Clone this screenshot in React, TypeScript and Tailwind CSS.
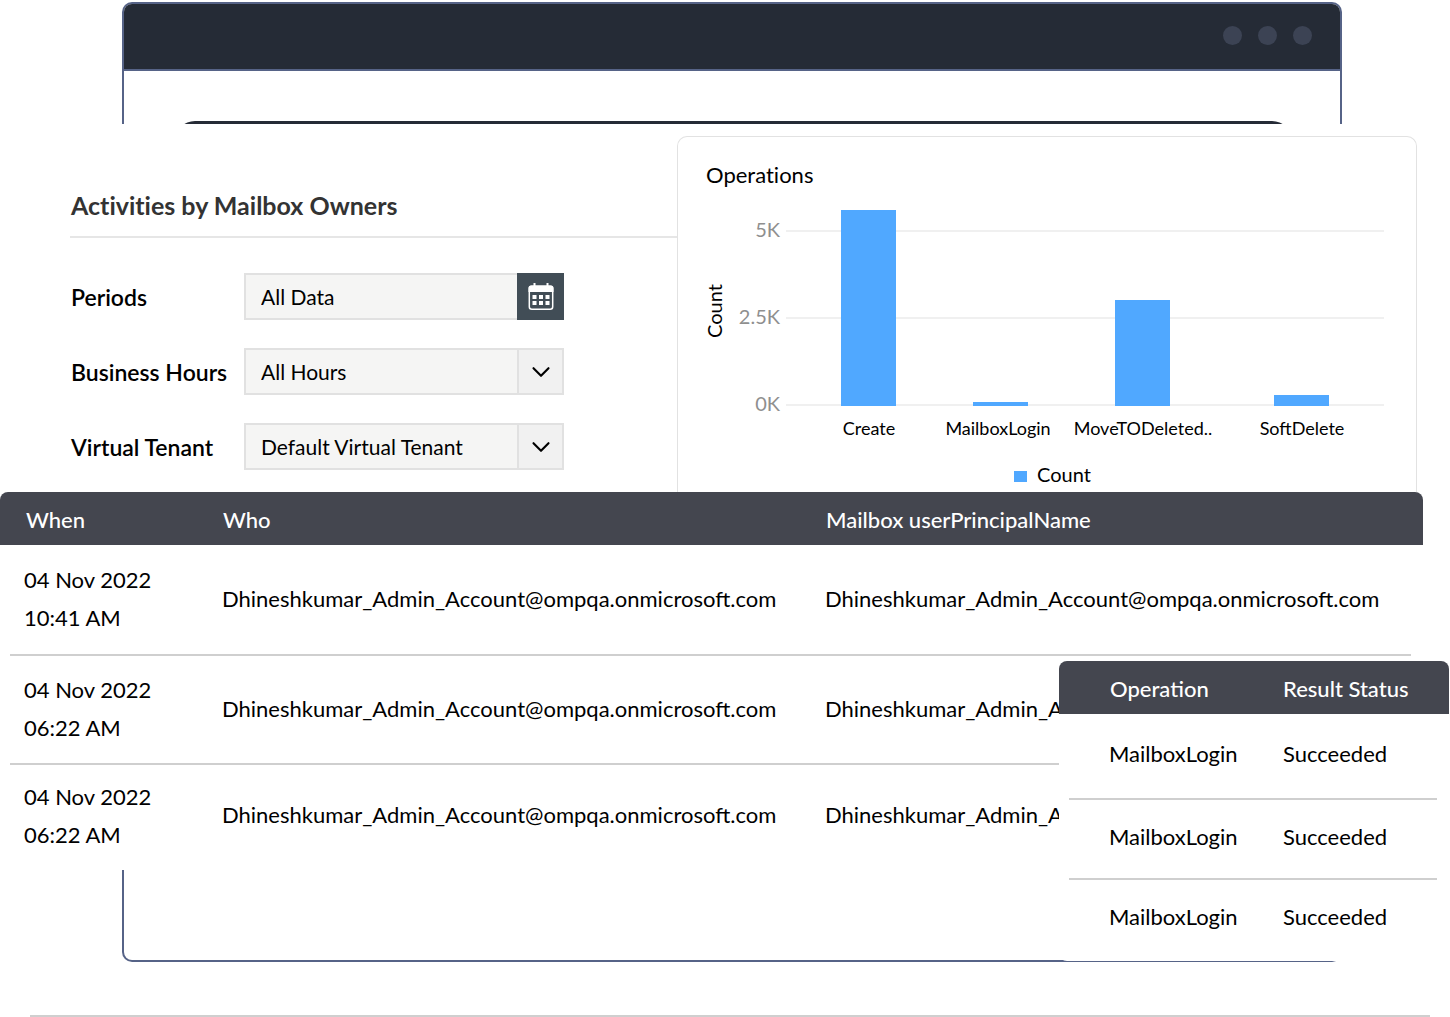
import { ChevronDown } from "lucide-react";

const activities = [
  { date: "04 Nov 2022", time: "10:41 AM", height: "h-[109px]" },
  { date: "04 Nov 2022", time: "06:22 AM", height: "h-[107px]" },
  { date: "04 Nov 2022", time: "06:22 AM", height: "h-[102px]" },
];

const account = "Dhineshkumar_Admin_Account@ompqa.onmicrosoft.com";

const bars = [
  { label: "Create", x: 163, top: 73, labelX: 191 },
  { label: "MailboxLogin", x: 295, top: 265, labelX: 320 },
  { label: "MoveTODeleted..", x: 437, top: 163, labelX: 465 },
  { label: "SoftDelete", x: 596, top: 258, labelX: 624 },
];

const ticks = [
  { label: "5K", y: 94 },
  { label: "2.5K", y: 181 },
  { label: "0K", y: 268 },
];

function CalendarIcon() {
  return (
    <svg width="26" height="28" viewBox="0 0 26 28" aria-hidden="true">
      <rect x="1.3" y="3.3" width="23.4" height="22.9" rx="2.5" fill="none" stroke="#fff" strokeWidth="1.5" />
      <path d="M.5 9V5A2.5 2.5 0 0 1 3 2.500h2.500V0H7.500v2.500h11V0h2v2.500H23A2.500 2.500 0 0 1 25.500 5v4z" fill="#fff" />
      <path
        d="M4.500 12h4v4h-4zM11 12h4v4h-4zM17.500 12h4v4h-4zM4.500 18h4v4h-4zM11 18h4v4h-4zM17.500 18h4v4h-4z"
        fill="#fff"
      />
    </svg>
  );
}

function SelectField({ id, label, value }: { id: string; label: string; value: string }) {
  return (
    <div className="flex items-center">
      <label htmlFor={id} className="w-[173px] text-[23px] leading-7 font-semibold">
        {label}
      </label>
      <div className="relative w-[320px]">
        <select
          id={id}
          className="block h-[47px] w-full appearance-none border-2 border-[#e1e1e1] bg-[#f5f5f4] px-[15px] text-[21px]"
        >
          <option>{value}</option>
        </select>
        <span className="pointer-events-none absolute inset-y-0 right-0 flex w-[47px] items-center justify-center border-2 border-[#e1e1e1] bg-[#f1f1f1]">
          <ChevronDown size={30} strokeWidth={1.7} />
        </span>
      </div>
    </div>
  );
}

function Filters() {
  return (
    <section className="pt-[65px] pl-[70px]">
      <h1 className="border-b-2 border-[#e6e6e6] pb-[15px] pl-px text-[25px] leading-8 font-bold text-[#333] [font-variant-ligatures:none]">
        Activities by Mailbox Owners
      </h1>
      <form className="flex flex-col gap-7 pt-[35px] pl-px">
        <div className="flex items-center">
          <label htmlFor="periods" className="w-[173px] text-[23px] leading-7 font-semibold">
            Periods
          </label>
          <div className="flex w-[320px]">
            <input
              id="periods"
              defaultValue="All Data"
              className="h-[47px] min-w-0 flex-1 border-2 border-r-0 border-[#e1e1e1] bg-[#f5f5f4] px-[15px] text-[21px]"
            />
            <button
              type="button"
              aria-label="Choose dates"
              className="flex h-[47px] w-[47px] items-center justify-center bg-[#414d56]"
            >
              <CalendarIcon />
            </button>
          </div>
        </div>
        <SelectField id="hours" label="Business Hours" value="All Hours" />
        <SelectField id="tenant" label="Virtual Tenant" value="Default Virtual Tenant" />
      </form>
    </section>
  );
}

function OperationsChart() {
  return (
    <section className="mt-3 rounded-t-[10px] border border-b-0 border-[#e2e2e2]">
      <h2 className="pt-6 pl-7 text-[22px] leading-7 [font-variant-ligatures:none]">Operations</h2>
      <svg viewBox="0 52 738 302" className="block w-full" role="img" aria-label="Operations">
        {ticks.map((tick) => (
          <g key={tick.label}>
            <rect x="108" y={tick.y - 1} width="598" height="2" fill="#f0f0f0" />
            <text x="102" y={tick.y + 6} textAnchor="end" fontSize="20" fill="#8f8f8f">
              {tick.label}
            </text>
          </g>
        ))}
        <text transform="translate(44 174) rotate(-90)" textAnchor="middle" fontSize="20">
          Count
        </text>
        {bars.map((bar) => (
          <g key={bar.label}>
            <rect x={bar.x} y={bar.top} width="55" height={269 - bar.top} fill="#50a8ff" />
            <text x={bar.labelX} y="298" textAnchor="middle" fontSize="18">
              {bar.label}
            </text>
          </g>
        ))}
        <rect x="336" y="334" width="13" height="11" fill="#50a8ff" />
        <text x="359" y="345" fontSize="20">
          Count
        </text>
      </svg>
    </section>
  );
}

function ActivityTable() {
  return (
    <table className="w-full table-fixed border-separate border-spacing-0 text-left text-[22px]">
      <thead>
        <tr className="h-[53px] text-white">
          <th className="w-[222px] rounded-tl-lg bg-[#44464f] p-0 pt-px pl-[26px] font-medium">When</th>
          <th className="w-[603px] bg-[#44464f] p-0 pt-px pl-px font-medium">Who</th>
          <th className="rounded-tr-lg bg-[#44464f] p-0 pt-px pl-px font-medium">Mailbox userPrincipalName</th>
        </tr>
      </thead>
      {activities.map((row, i) => (
        <tbody key={i}>
          {i > 0 && (
            <tr aria-hidden="true">
              <td colSpan={3} className="p-0 pr-3 pl-2.5">
                <div className="h-0.5 bg-[#cfcfcf]" />
              </td>
            </tr>
          )}
          <tr className={row.height}>
            <td className="p-0 pb-px pl-6 leading-[38px]">
              {row.date}
              <br />
              {row.time}
            </td>
            <td className="p-0 pb-[3px]">{account}</td>
            <td className="p-0 pb-[3px]">{account}</td>
          </tr>
        </tbody>
      ))}
    </table>
  );
}

function ResultTable() {
  return (
    <table className="w-full table-fixed border-separate border-spacing-0 text-left text-[22px]">
      <thead>
        <tr className="h-[53px] text-white">
          <th className="w-[224px] rounded-tl-lg bg-[#44464f] p-0 pt-0.5 pl-[51px] font-medium">Operation</th>
          <th className="rounded-tr-lg bg-[#44464f] p-0 pt-0.5 font-medium">Result Status</th>
        </tr>
      </thead>
      {[0, 1, 2].map((i) => (
        <tbody key={i}>
          {i > 0 && (
            <tr aria-hidden="true">
              <td colSpan={2} className="p-0 pr-3 pl-2.5">
                <div className="h-0.5 bg-[#cfcfcf]" />
              </td>
            </tr>
          )}
          <tr className={i === 0 ? "h-[84px]" : "h-[78px]"}>
            <td className="p-0 pb-1.5 pl-[50px]">MailboxLogin</td>
            <td className="p-0 pb-1.5">Succeeded</td>
          </tr>
        </tbody>
      ))}
    </table>
  );
}

export default function App() {
  return (
    <div className="relative bg-white pt-0.5 font-[Lato,sans-serif] text-black">
      <header className="mr-[108px] ml-[122px] rounded-t-[10px] border-2 border-b-0 border-[#566387]">
        <div className="flex h-[67px] items-center justify-end gap-4 rounded-t-lg border-b-2 border-[#566387] bg-[#252b36] pr-7 pb-0.5">
          <span className="size-[19px] rounded-full bg-[#3c4354]" />
          <span className="size-[19px] rounded-full bg-[#3c4354]" />
          <span className="size-[19px] rounded-full bg-[#3c4354]" />
        </div>
        <div className="mt-[50px] mr-12 ml-[51px] h-[3px] overflow-hidden">
          <div className="h-10 rounded-t-[20px] bg-[#252b36]" />
        </div>
      </header>

      <main>
        <div className="mr-[33px] grid h-[368px] grid-cols-[677fr_740fr] overflow-hidden">
          <Filters />
          <OperationsChart />
        </div>
        <div className="mr-[27px] pb-[3px]">
          <ActivityTable />
        </div>
      </main>

      <div className="mr-[108px] ml-[122px] h-[92px] rounded-b-[10px] border-2 border-t-0 border-[#566387]" />
      <hr className="mt-[53px] mr-5 ml-[30px] border-t-2 border-[#cfcfcf]" />

      <aside className="absolute top-[661px] right-0 h-[300px] w-[391px] rounded-b-lg bg-white pr-px">
        <ResultTable />
      </aside>
    </div>
  );
}
